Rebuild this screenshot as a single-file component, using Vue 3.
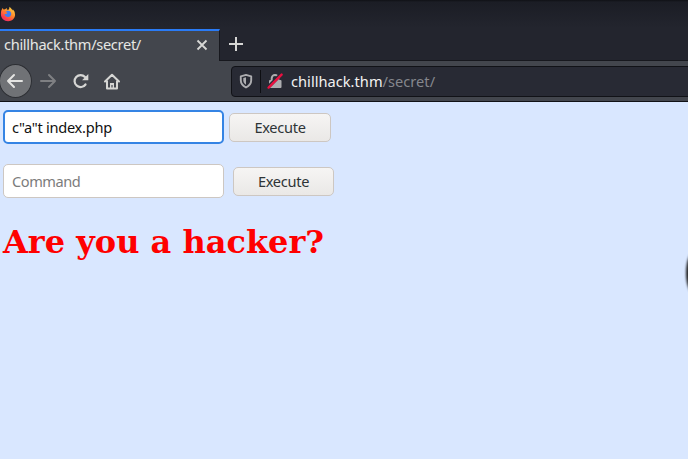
<script setup>
import { ref } from 'vue'

const first = ref('c"a"t index.php')
const second = ref('')
</script>

<template>
  <div class="browser">
    <header class="titlebar">
      <svg class="fox" width="16" height="16" viewBox="0 0 16 16">
        <defs>
          <linearGradient id="flame" x1="0.85" y1="0" x2="0.2" y2="1">
            <stop offset="0" stop-color="#ffe04a" />
            <stop offset="0.45" stop-color="#ff8a2b" />
            <stop offset="0.8" stop-color="#fa3c4c" />
            <stop offset="1" stop-color="#e0307a" />
          </linearGradient>
        </defs>
        <path fill="url(#flame)" d="M1.4 4.2 2.6 2l1 1.5 1.5-.2L6.7 2l.2 1.7L9 3.500 9.600.8l2 2.200.9 1.600.3-1.400 1.800 2.600.5 3.200c-.3 3.600-3.200 6.200-7 6.200C4 15.200.9 12.300.9 8.300c0-1.600.1-3 .5-4.100Z" />
        <path fill="#3d7df2" d="M6.300 5.200c2-.9 4.200-.2 4.800 1.700.6 2.100-.9 4-3 4S4.600 9.600 4.600 8l1.800.1 1.200-1.300-1.300-.2Z" />
        <path fill="#ff7139" d="M3 5.200 5.500 5l.8 1.400-1.500 1.500L3 7.300Z" />
      </svg>
    </header>

    <div class="tabs">
      <div class="tab">
        <span class="tab-title">chillhack.thm/secret/</span>
        <svg class="close" width="12" height="12" viewBox="0 0 12 12">
          <path d="M1.500 1.500l9 9M10.500 1.500l-9 9" stroke="#d8d8d6" stroke-width="1.800" />
        </svg>
      </div>
      <svg class="plus" width="16" height="16" viewBox="0 0 16 16">
        <path d="M8 1v14M1 8h14" stroke="#d6d6d4" stroke-width="2" />
      </svg>
    </div>

    <nav class="toolbar">
      <div class="back">
        <svg width="18" height="16" viewBox="0 0 18 16" fill="none" stroke="#e4e4e2" stroke-width="2" stroke-linecap="round" stroke-linejoin="round">
          <path d="M16 8H2M8 2L2 8l6 6" />
        </svg>
      </div>
      <svg class="forward" width="18" height="16" viewBox="0 0 18 16" fill="none" stroke="#7f8083" stroke-width="2" stroke-linecap="round" stroke-linejoin="round">
        <path d="M2 8H16M10 2l6 6-6 6" />
      </svg>
      <svg class="reload" width="16" height="16" viewBox="0 0 16 16">
        <path d="M12.500 11.500A6 6 0 1 1 12 4" fill="none" stroke="#d6d6d4" stroke-width="2.200" stroke-linecap="round" />
        <path d="M15.300 1v6.200H9.100Z" fill="#d6d6d4" />
      </svg>
      <svg class="home" width="18" height="17" viewBox="0 0 18 17" fill="none" stroke="#d6d6d4" stroke-width="2" stroke-linecap="round" stroke-linejoin="round">
        <path d="M2 8.500 9 1.700l7 6.800M4 8v7.500h10V8" />
        <path d="M9 15v-5" stroke-width="4" stroke-linecap="butt" />
        <path d="M9 14.500v-2.500" stroke="#43464d" stroke-width="1.200" stroke-linecap="butt" />
      </svg>
      <div class="address">
        <svg class="shield" width="14" height="16" viewBox="0 0 14 16">
          <path d="M7 1.900 12.200 3.300v4c0 3.500-1.900 5.500-5.200 7.200-3.300-1.700-5.200-3.700-5.200-7.200v-4Z" fill="none" stroke="#adadb0" stroke-width="1.900" stroke-linejoin="round" />
          <path d="M7 4.300v7.500C5 10.500 4.300 9 4.300 7.300V5Z" fill="#adadb0" />
        </svg>
        <span class="divider"></span>
        <svg class="lock" width="16" height="16" viewBox="0 0 16 16">
          <path d="M4.700 8V5.200a3.300 3.300 0 0 1 6.600 0V8" fill="none" stroke="#adadb0" stroke-width="2" />
          <rect x="2" y="7" width="12.500" height="8" rx="1" fill="#adadb0" />
          <path d="M.8 14.500 14.200 1.100" stroke="#282a34" stroke-width="3.600" />
          <path d="M1.600 14.600 14.600 1.600" stroke="#ea1040" stroke-width="2.400" stroke-linecap="round" />
        </svg>
        <span class="url">chillhack.thm<span class="path">/secret/</span></span>
      </div>
    </nav>

    <main class="page">
      <form class="row" @submit.prevent>
        <input v-model="first" class="field focused" type="text" placeholder="Command" />
        <button class="execute">Execute</button>
      </form>
      <form class="row second" @submit.prevent>
        <input v-model="second" class="field" type="text" placeholder="Command" />
        <button class="execute">Execute</button>
      </form>
      <h1 class="warning">Are you a hacker?</h1>
      <div class="edge"></div>
    </main>
  </div>
</template>

<style>
body {
  margin: 0;
  overflow: hidden;
}
</style>

<style scoped>
.browser {
  width: 688px;
  height: 459px;
  display: flex;
  flex-direction: column;
  overflow: hidden;
  font-family: "Noto Sans", sans-serif;
  font-size: 14.6px;
}
.browser * {
  box-sizing: border-box;
}
svg {
  display: block;
  flex: none;
}
.titlebar {
  flex: none;
  height: 29px;
  padding-top: 6px;
  background: linear-gradient(#101116 0, #1b1d25 2px, #23252e 28px);
}
.tabs {
  flex: none;
  height: 32px;
  display: flex;
  background: #23252e;
  border-bottom: 1px solid #17181e;
}
.tab {
  width: 220px;
  height: 32px;
  padding: 0 11px 2px 4px;
  display: flex;
  align-items: center;
  justify-content: space-between;
  background: #43464d;
  border-top: 2px solid #2a7bf6;
  border-right: 1px solid #17181e;
  color: #e6e6e4;
}
.tab-title {
  padding-bottom: 2px;
  line-height: 20px;
  letter-spacing: -0.31px;
}
.plus {
  margin: 7px 0 0 8px;
}
.toolbar {
  flex: none;
  height: 41px;
  display: flex;
  align-items: center;
  background: #43464d;
  border-bottom: 1px solid #111216;
}
.back {
  flex: none;
  width: 33px;
  height: 34px;
  margin-left: -1px;
  display: flex;
  align-items: center;
  justify-content: center;
  border-radius: 50%;
  background: #707276;
  border: 1px solid #2c2e33;
}
.back svg {
  margin-right: 1px;
}
.forward {
  margin-left: 7px;
}
.reload {
  margin-left: 16px;
}
.home {
  margin-left: 14px;
}
.address {
  flex: none;
  width: 470px;
  height: 31px;
  margin-left: 110px;
  padding-left: 7px;
  display: flex;
  align-items: center;
  background: #282a34;
  border: 1px solid #111217;
  border-radius: 4px;
}
.divider {
  width: 1px;
  height: 23px;
  margin: 0 6px 0 7px;
  background: #0d0e12;
}
.url {
  margin-left: 8px;
  color: #f2f2f1;
  white-space: nowrap;
  letter-spacing: 0.03px;
}
.path {
  color: #85878d;
}
.page {
  position: relative;
  flex: 1;
  padding: 8px 0 0 3px;
  background: #d9e7ff;
}
.row {
  height: 34px;
  display: flex;
  align-items: center;
  gap: 5px;
}
.row.second {
  margin-top: 20px;
  gap: 9px;
}
.field {
  width: 221px;
  height: 34px;
  margin: 0;
  padding: 0 8px;
  border: 1px solid #cdc7c2;
  border-radius: 5px;
  outline: none;
  background: #fff;
  color: #111;
  font: 14.6px "Noto Sans", sans-serif;
  letter-spacing: -0.28px;
}
.field.focused {
  padding: 0 7px;
  border: 2px solid #3584e4;
}
.field::placeholder {
  color: #7c7c7c;
  opacity: 1;
  letter-spacing: -0.45px;
}
.execute {
  width: 102px;
  height: 29px;
  margin: 1px 0 0;
  padding: 0 0 2px;
  border: 1px solid #cdc7c2;
  border-radius: 5px;
  background: linear-gradient(#f6f5f4, #eae8e6);
  color: #2e3436;
  font: 14.6px "Noto Sans", sans-serif;
  letter-spacing: -0.3px;
}
.second .execute {
  width: 101px;
}
.warning {
  margin: 25px 0 0;
  color: #f00;
  font: bold 32px/38px "DejaVu Serif", serif;
  white-space: nowrap;
}
.edge {
  position: absolute;
  left: 685.500px;
  top: 147px;
  width: 22px;
  height: 48px;
  border-radius: 50%;
  background: #222;
  filter: blur(1px);
}
</style>
